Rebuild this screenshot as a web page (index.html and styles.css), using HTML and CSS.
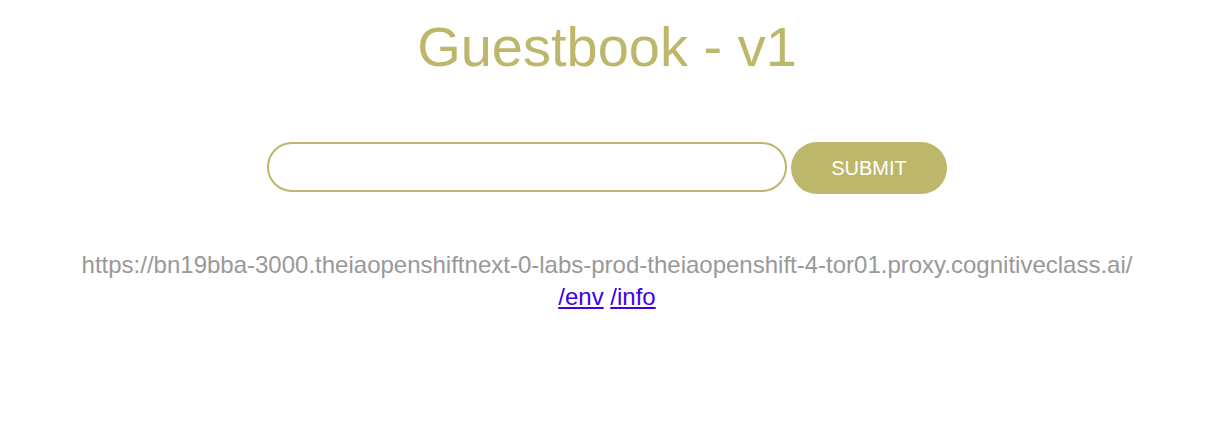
FILE: index.html
```
<!DOCTYPE html>
<html>
<head>
<meta charset="utf-8">
<link rel="stylesheet" href="styles.css">
</head>
<body>
<h1 class="title">Guestbook - v1</h1>
<form class="entry-form">
<input class="entry-input" type="text" autocomplete="off">
<a href="#" class="submit-btn">SUBMIT</a>
</form>
<div class="host">
<div class="host-address">https://bn19bba-3000.theiaopenshiftnext-0-labs-prod-theiaopenshift-4-tor01.proxy.cognitiveclass.ai/</div>
<div class="host-links"><a href="env">/env</a> <a href="info">/info</a></div>
</div>
</body>
</html>
```
FILE: styles.css
```
body {
  margin: 0;
  padding-right: 13px;
  background: #fff;
  font-family: "Liberation Sans", Arial, sans-serif;
  text-align: center;
}
.title {
  margin: 15px 0 0;
  font-size: 56px;
  font-weight: normal;
  line-height: 64px;
  color: #bdb76b;
}
.entry-form {
  margin-top: 63px;
  display: flex;
  justify-content: center;
  align-items: flex-start;
  gap: 4px;
}
.entry-input {
  box-sizing: border-box;
  width: 520px;
  height: 50px;
  border: 2px solid #bdb76b;
  border-radius: 25px;
  outline: none;
  padding: 0 20px;
  font-size: 20px;
  font-family: inherit;
  color: #bdb76b;
}
.submit-btn {
  box-sizing: border-box;
  width: 156px;
  height: 52px;
  border-radius: 26px;
  background: #bdb76b;
  color: #fff;
  text-decoration: none;
  font-size: 20px;
  display: flex;
  align-items: center;
  justify-content: center;
}
.host {
  margin-top: 55px;
  font-size: 24px;
  line-height: 32px;
}
.host-address {
  color: #999;
}
.host-links a {
  color: #3f00e8;
}
```
